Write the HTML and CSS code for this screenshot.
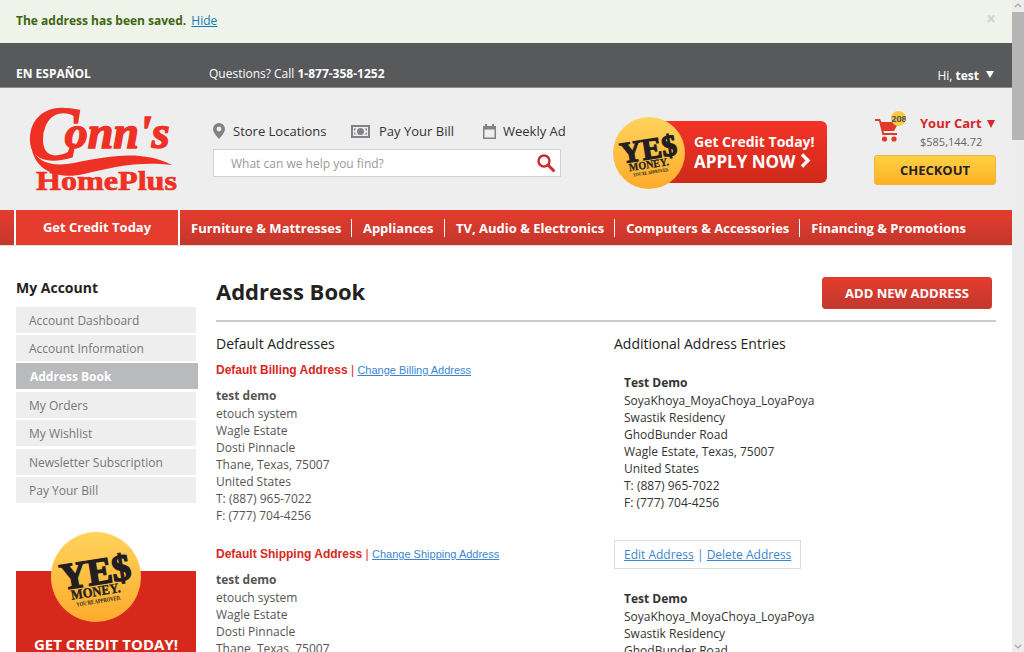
FILE: index.html
```html
<!DOCTYPE html>
<html lang="en">
<head>
    <meta charset="UTF-8">
    <title>Address Book</title>
    <link rel="stylesheet" href="styles.css">
</head>
<body>
    <svg class="defs" width="0" height="0">
        <defs>
            <linearGradient id="coinFill" x1="0" y1="0" x2="0" y2="1">
                <stop offset="0" stop-color="#ffd35c"/>
                <stop offset="1" stop-color="#fdab2b"/>
            </linearGradient>
            <symbol id="coin" viewBox="0 0 72 72">
                <circle cx="36" cy="36" r="36" fill="url(#coinFill)"/>
                <g transform="rotate(-9 36 36)" fill="#231f20" font-family="'Liberation Serif', serif" font-weight="700" text-anchor="middle">
                    <text x="36" y="42" font-size="30" textLength="57" lengthAdjust="spacingAndGlyphs" stroke="#231f20" stroke-width="1.300">YE$</text>
                    <text x="34" y="51" font-size="11" textLength="40" lengthAdjust="spacingAndGlyphs" stroke="#231f20" stroke-width="0.300">MONEY.</text>
                    <text x="35" y="57" font-size="5" textLength="36" lengthAdjust="spacingAndGlyphs">YOU'RE APPROVED.</text>
                </g>
            </symbol>
        </defs>
    </svg>

    <!-- saved message -->
    <div class="notice">
        <strong>The address has been saved.</strong>
        <a href="#">Hide</a>
        <span class="notice-close">&times;</span>
    </div>

    <!-- top bar -->
    <div class="topbar">
        <a class="lang" href="#">EN ESPAÑOL</a>
        <span class="phone">Questions? Call <b>1-877-358-1252</b></span>
        <span class="hello">Hi, <b>test</b><i class="tri tri-white"></i></span>
    </div>

    <!-- logo, links, search, cart -->
    <header class="header">
        <a class="logo" href="#">
            <svg width="154" height="88" viewBox="0 0 154 88">
                <path fill="#ee3124" d="M3 40C8 58 24 62 46 58C78 52 112 44 144 60C112 56 84 62 56 69C30 75 6 66 3 40Z"/>
                <text x="0" y="54" fill="#ee3124" stroke="#ee3124" stroke-width="1.500" font-family="'Liberation Serif', serif" font-weight="700" font-style="italic" font-size="76">C<tspan dx="-14" dy="-11" font-size="46">onn's</tspan></text>
                <text x="8" y="85" fill="#ee3124" stroke="#ee3124" stroke-width="0.700" font-family="'Liberation Serif', serif" font-weight="700" font-size="27" textLength="141" lengthAdjust="spacingAndGlyphs">HomePlus</text>
            </svg>
        </a>

        <div class="tools">
            <nav class="quick-links">
                <a href="#">
                    <svg width="12" height="16" viewBox="0 0 12 16"><path fill="#808285" fill-rule="evenodd" d="M6 0a6 6 0 0 1 6 6c0 3.500-4 7.500-6 10C4 13.500 0 9.500 0 6a6 6 0 0 1 6-6Zm0 3.600a2.400 2.400 0 1 0 0 4.800 2.400 2.400 0 0 0 0-4.800Z"/></svg>
                    Store Locations
                </a>
                <a href="#">
                    <svg width="19" height="13" viewBox="0 0 19 13"><path fill="#808285" fill-rule="evenodd" d="M0 0h19v13H0Zm2 2v9h15V2Zm7.500 1a3.500 3.500 0 1 1 0 7 3.500 3.500 0 0 1 0-7ZM3 3.500h2.500L3 6Zm13 0V6l-2.500-2.500ZM3 9.500V7l2.500 2.500Zm13 0h-2.500L16 7Z"/></svg>
                    Pay Your Bill
                </a>
                <a href="#">
                    <svg width="13" height="15" viewBox="0 0 13 15"><path fill="#808285" fill-rule="evenodd" d="M2 0h2v2h5V0h2v2h2v13H0V2h2Zm-.5 5.500v8h10v-8Z"/></svg>
                    Weekly Ad
                </a>
            </nav>
            <div class="search">
                <span>What can we help you find?</span>
                <svg width="18" height="18" viewBox="0 0 18 18"><circle cx="7" cy="7" r="5.500" fill="none" stroke="#d2282a" stroke-width="2.400"/><path d="M11 11l5.500 5.500" stroke="#d2282a" stroke-width="3" stroke-linecap="round"/></svg>
            </div>
        </div>

        <a class="apply" href="#">
            <svg class="apply-coin" width="72" height="72"><use href="#coin"/></svg>
            <span class="apply-box">
                <span class="apply-small">Get Credit Today!</span>
                <span class="apply-big">APPLY NOW
                    <svg width="11" height="15" viewBox="0 0 11 15"><path d="M2 1.500L8 7.500L2 13.500" fill="none" stroke="#fff" stroke-width="3.400"/></svg>
                </span>
            </span>
        </a>

        <div class="cart">
            <div class="cart-top">
                <div class="cart-icon">
                    <svg width="26" height="26" viewBox="0 0 26 26">
                        <path fill="#e03a2c" d="M0 2h5l1.500 3H24l-5 9H8.500l.5 2h13v2H7.500L4 4H0Z"/>
                        <circle cx="9.500" cy="22" r="2.600" fill="#e03a2c"/>
                        <circle cx="19" cy="22" r="2.600" fill="#e03a2c"/>
                    </svg>
                    <span class="cart-count">208</span>
                </div>
                <div class="cart-text">
                    <div class="cart-title">Your Cart<i class="tri tri-red"></i></div>
                    <div class="cart-price">$585,144.72</div>
                </div>
            </div>
            <a class="checkout" href="#">CHECKOUT</a>
        </div>
    </header>

    <!-- main navigation -->
    <nav class="mainnav">
        <a class="nav-credit" href="#">Get Credit Today</a>
        <div class="nav-items">
            <a href="#">Furniture &amp; Mattresses</a>
            <a href="#">Appliances</a>
            <a href="#">TV, Audio &amp; Electronics</a>
            <a href="#">Computers &amp; Accessories</a>
            <a href="#">Financing &amp; Promotions</a>
        </div>
    </nav>

    <div class="page">
        <aside class="sidebar">
            <h3>My Account</h3>
            <ul class="account-menu">
                <li><a href="#">Account Dashboard</a></li>
                <li><a href="#">Account Information</a></li>
                <li class="active"><a href="#">Address Book</a></li>
                <li><a href="#">My Orders</a></li>
                <li><a href="#">My Wishlist</a></li>
                <li><a href="#">Newsletter Subscription</a></li>
                <li><a href="#">Pay Your Bill</a></li>
            </ul>
            <div class="promo">
                <svg class="promo-coin" width="90" height="90"><use href="#coin"/></svg>
                <span>GET CREDIT TODAY!</span>
            </div>
        </aside>

        <main class="content">
            <div class="title-row">
                <h1>Address Book</h1>
                <a class="add-btn" href="#">ADD NEW ADDRESS</a>
            </div>
            <div class="columns">
                <section class="col-left">
                    <h2>Default Addresses</h2>
                    <div class="addr-head"><b>Default Billing Address</b> | <a href="#">Change Billing Address</a></div>
                    <address class="addr-default">
                        <b>test demo</b>
                        etouch system<br>Wagle Estate<br>Dosti Pinnacle<br>Thane, Texas, 75007<br>United States<br>T: (887) 965-7022<br>F: (777) 704-4256
                    </address>
                    <div class="addr-head addr-head-next"><b>Default Shipping Address</b> | <a href="#">Change Shipping Address</a></div>
                    <address class="addr-default">
                        <b>test demo</b>
                        etouch system<br>Wagle Estate<br>Dosti Pinnacle<br>Thane, Texas, 75007<br>United States
                    </address>
                </section>
                <section class="col-right">
                    <h2>Additional Address Entries</h2>
                    <address class="addr-extra">
                        <b>Test Demo</b>
                        SoyaKhoya_MoyaChoya_LoyaPoya<br>Swastik Residency<br>GhodBunder Road<br>Wagle Estate, Texas, 75007<br>United States<br>T: (887) 965-7022<br>F: (777) 704-4256
                    </address>
                    <div class="addr-actions"><a href="#">Edit Address</a> | <a href="#">Delete Address</a></div>
                    <address class="addr-extra">
                        <b>Test Demo</b>
                        SoyaKhoya_MoyaChoya_LoyaPoya<br>Swastik Residency<br>GhodBunder Road<br>Wagle Estate, Texas, 75007
                    </address>
                </section>
            </div>
        </main>
    </div>

    <!-- browser scrollbar -->
    <div class="scrollbar">
        <svg width="12" height="12" viewBox="0 0 12 12"><path d="M3 7l3-3 3 3" fill="none" stroke="#a6a6a6" stroke-width="1.200"/></svg>
        <div class="scrollbar-thumb"></div>
        <svg class="scrollbar-down" width="12" height="12" viewBox="0 0 12 12"><path d="M3 5l3 3 3-3" fill="none" stroke="#a6a6a6" stroke-width="1.200"/></svg>
    </div>
</body>
</html>
```

FILE: styles.css
```css
html, body {
    height: 652px;
    overflow: hidden;
}

body {
    margin: 0;
    width: 1012px;
    font-family: "Open Sans", sans-serif;
    font-size: 12px;
    color: #555;
    background-color: #fff;
}

a {
    color: inherit;
    text-decoration: none;
}

.defs {
    position: absolute;
}

/* notice */
.notice {
    position: relative;
    box-sizing: border-box;
    height: 43px;
    padding: 13px 16px 0;
    line-height: 16px;
    background-color: #eff4ea;
    color: #3d6611;
}

.notice a {
    margin-left: 2px;
    color: #0f7ab4;
    text-decoration: underline;
}

.notice-close {
    position: absolute;
    right: 16px;
    top: 9px;
    font-size: 17px;
    font-weight: 700;
    line-height: 20px;
    color: #cfd3cb;
}

/* top bar */
.topbar {
    position: relative;
    box-sizing: border-box;
    height: 45px;
    padding: 22px 16px 0;
    line-height: 17px;
    background-color: #58595b;
    border-bottom: 1px solid #8a8b8c;
    color: #fff;
}

.lang {
    font-weight: 700;
}

.phone {
    position: absolute;
    left: 209px;
}

.hello {
    position: absolute;
    right: 18px;
    top: 24px;
}

.tri {
    display: inline-block;
    width: 0;
    height: 0;
    border-left: 4px solid transparent;
    border-right: 4px solid transparent;
}

.tri-white {
    margin-left: 7px;
    margin-bottom: 2px;
    border-top: 7px solid #fff;
}

.tri-red {
    margin-left: 5px;
    border-top: 8px solid #d2282a;
}

/* header */
.header {
    display: flex;
    height: 122px;
    background-color: #eee;
}

.logo {
    width: 185px;
    padding: 17px 0 0 28px;
}

.tools {
    width: 348px;
    padding-top: 34px;
}

.quick-links {
    display: flex;
    height: 27px;
    font-size: 13px;
    color: #333;
    white-space: nowrap;
}

.quick-links a {
    display: flex;
    align-items: center;
    height: 18px;
    gap: 8px;
    margin-right: 24.500px;
}

.quick-links a:nth-child(2) {
    gap: 9px;
    margin-right: 29px;
}

.quick-links a:nth-child(3) {
    margin-right: 0;
    gap: 7px;
}

.search {
    display: flex;
    align-items: center;
    justify-content: space-between;
    box-sizing: border-box;
    height: 28px;
    padding: 0 5px 0 17px;
    background-color: #fff;
    border: 1px solid #d2d2d2;
    font-size: 12px;
    color: #999;
}

.apply {
    position: relative;
    width: 214px;
    margin-left: 52px;
    padding-top: 33px;
}

.apply-coin {
    position: absolute;
    left: 0;
    top: 29px;
}

.apply-box {
    display: block;
    box-sizing: border-box;
    width: 167px;
    height: 62px;
    margin-left: 47px;
    padding: 11px 0 0 34px;
    border-radius: 6px;
    background: linear-gradient(#f43227, #cf2a1a);
    color: #fff;
    font-weight: 700;
}

.apply-small {
    display: block;
    font-size: 14px;
    font-weight: 700;
    line-height: 20px;
    white-space: nowrap;
}

.apply-big {
    display: block;
    font-size: 17px;
    line-height: 20px;
}

.cart {
    width: 122px;
    margin-left: 47px;
    padding-top: 24px;
}

.cart-top {
    display: flex;
    height: 43px;
}

.cart-icon {
    position: relative;
    box-sizing: border-box;
    width: 46px;
    padding: 5px 0 0 1px;
}

.cart-count {
    position: absolute;
    left: 17px;
    top: -1px;
    width: 15px;
    height: 15px;
    overflow: hidden;
    border-radius: 50%;
    background-color: #fdc93f;
    font-size: 9.500px;
    font-weight: 700;
    letter-spacing: -0.300px;
    line-height: 15px;
    color: #58595b;
    white-space: nowrap;
}

.cart-title {
    font-size: 13px;
    font-weight: 700;
    line-height: 22px;
    color: #d2282a;
    white-space: nowrap;
}

.cart-price {
    font-size: 11px;
    line-height: 15px;
    color: #666;
}

.checkout {
    display: block;
    box-sizing: border-box;
    height: 30px;
    border: 1px solid #f1b53a;
    border-radius: 3px;
    background: linear-gradient(#ffd044, #fdb124);
    font-size: 13px;
    font-weight: 700;
    line-height: 28px;
    text-align: center;
    color: #222;
}

/* main navigation */
.mainnav {
    display: flex;
    height: 35px;
    background: linear-gradient(#e43c2d, #c4372d);
    border-bottom: 1px solid #ddd;
    font-size: 13px;
    font-weight: 700;
    color: #fff;
}

.nav-credit {
    box-sizing: border-box;
    width: 166px;
    margin-left: 14px;
    border-left: 2px solid #fff;
    border-right: 2px solid #fff;
    background-color: #e63c2e;
    text-align: center;
    line-height: 34px;
}

.nav-items {
    display: flex;
    align-items: center;
    padding-left: 11px;
    white-space: nowrap;
}

.nav-items a {
    padding: 0 10px 0 11px;
    line-height: 18px;
    border-right: 1px solid #fff;
}

.nav-items a:first-child {
    padding: 0 9.500px 0 0;
}

.nav-items a:nth-child(2) {
    padding-right: 10.500px;
}

.nav-items a:last-child {
    border-right: none;
}

/* page body */
.page {
    display: flex;
    padding: 0 16px;
}

.sidebar {
    width: 180px;
    margin-right: 20px;
    padding-top: 32px;
}

.sidebar h3 {
    margin: 0 0 9px;
    font-size: 14px;
    font-weight: 700;
    line-height: 20px;
    color: #222;
}

.account-menu {
    margin: 0;
    padding: 0;
    list-style: none;
}

.account-menu li {
    height: 26px;
    margin-bottom: 2.330px;
    padding-left: 13px;
    background-color: #eee;
    line-height: 27px;
    color: #777;
}

.account-menu .active {
    width: 168px;
    margin-top: -0.500px;
    margin-bottom: 2.830px;
    padding-left: 14px;
    background-color: #b9babc;
    font-weight: 700;
    color: #fff;
}

.promo {
    position: relative;
    height: 100px;
    margin-top: 68px;
    background-color: #d7281d;
    text-align: center;
    font-size: 15px;
    font-weight: 700;
    color: #fff;
}

.promo-coin {
    position: absolute;
    left: 35px;
    top: -39px;
}

.promo span {
    display: block;
    padding-top: 63px;
}

.content {
    width: 780px;
}

.title-row {
    display: flex;
    justify-content: space-between;
    box-sizing: border-box;
    height: 76px;
    padding: 31px 4px 0 0;
    border-bottom: 2px solid #ccc;
}

.title-row h1 {
    margin: -1px 0 0;
    font-size: 22px;
    font-weight: 700;
    line-height: 30px;
    color: #222;
}

.add-btn {
    box-sizing: border-box;
    width: 170px;
    height: 32px;
    border: 1px solid #d43a2e;
    border-radius: 3px;
    background: linear-gradient(#e33c2e, #c4372d);
    font-size: 13px;
    font-weight: 700;
    line-height: 31px;
    text-align: center;
    color: #fff;
}

.columns {
    display: flex;
}

.col-left {
    width: 398px;
}

.columns h2 {
    margin: 12px 0 0;
    font-size: 14px;
    font-weight: 400;
    line-height: 20px;
    color: #222;
}

address {
    font-style: normal;
    line-height: 17px;
}

address b {
    display: block;
    line-height: 19px;
}

.addr-head {
    margin-top: 8px;
    height: 17px;
    font-family: "Liberation Sans", sans-serif;
    font-size: 12px;
    line-height: 17px;
    color: #d7281d;
}

.addr-head a {
    font-size: 11px;
    color: #3b86cf;
    text-decoration: underline;
}

.addr-head-next {
    margin-top: 22px;
}

.addr-default {
    margin-top: 8px;
}

.addr-default b {
    line-height: 18px;
}

.addr-extra {
    padding-left: 10px;
    color: #333;
}

.col-right h2 + .addr-extra {
    margin-top: 19px;
}

.addr-actions {
    box-sizing: border-box;
    width: 187px;
    height: 29px;
    margin: 29px 0 20px;
    padding-left: 9px;
    border: 1px solid #ddd;
    line-height: 27px;
    color: #3b86cf;
}

.addr-actions a {
    text-decoration: underline;
}

/* browser scrollbar */
.scrollbar {
    position: fixed;
    top: 0;
    right: 0;
    width: 12px;
    height: 652px;
    background-color: #ececec;
}

.scrollbar svg {
    display: block;
}

.scrollbar-thumb {
    width: 12px;
    height: 128px;
    background-color: #b5b5b5;
}

.scrollbar-down {
    position: absolute;
    bottom: 0;
}
```
